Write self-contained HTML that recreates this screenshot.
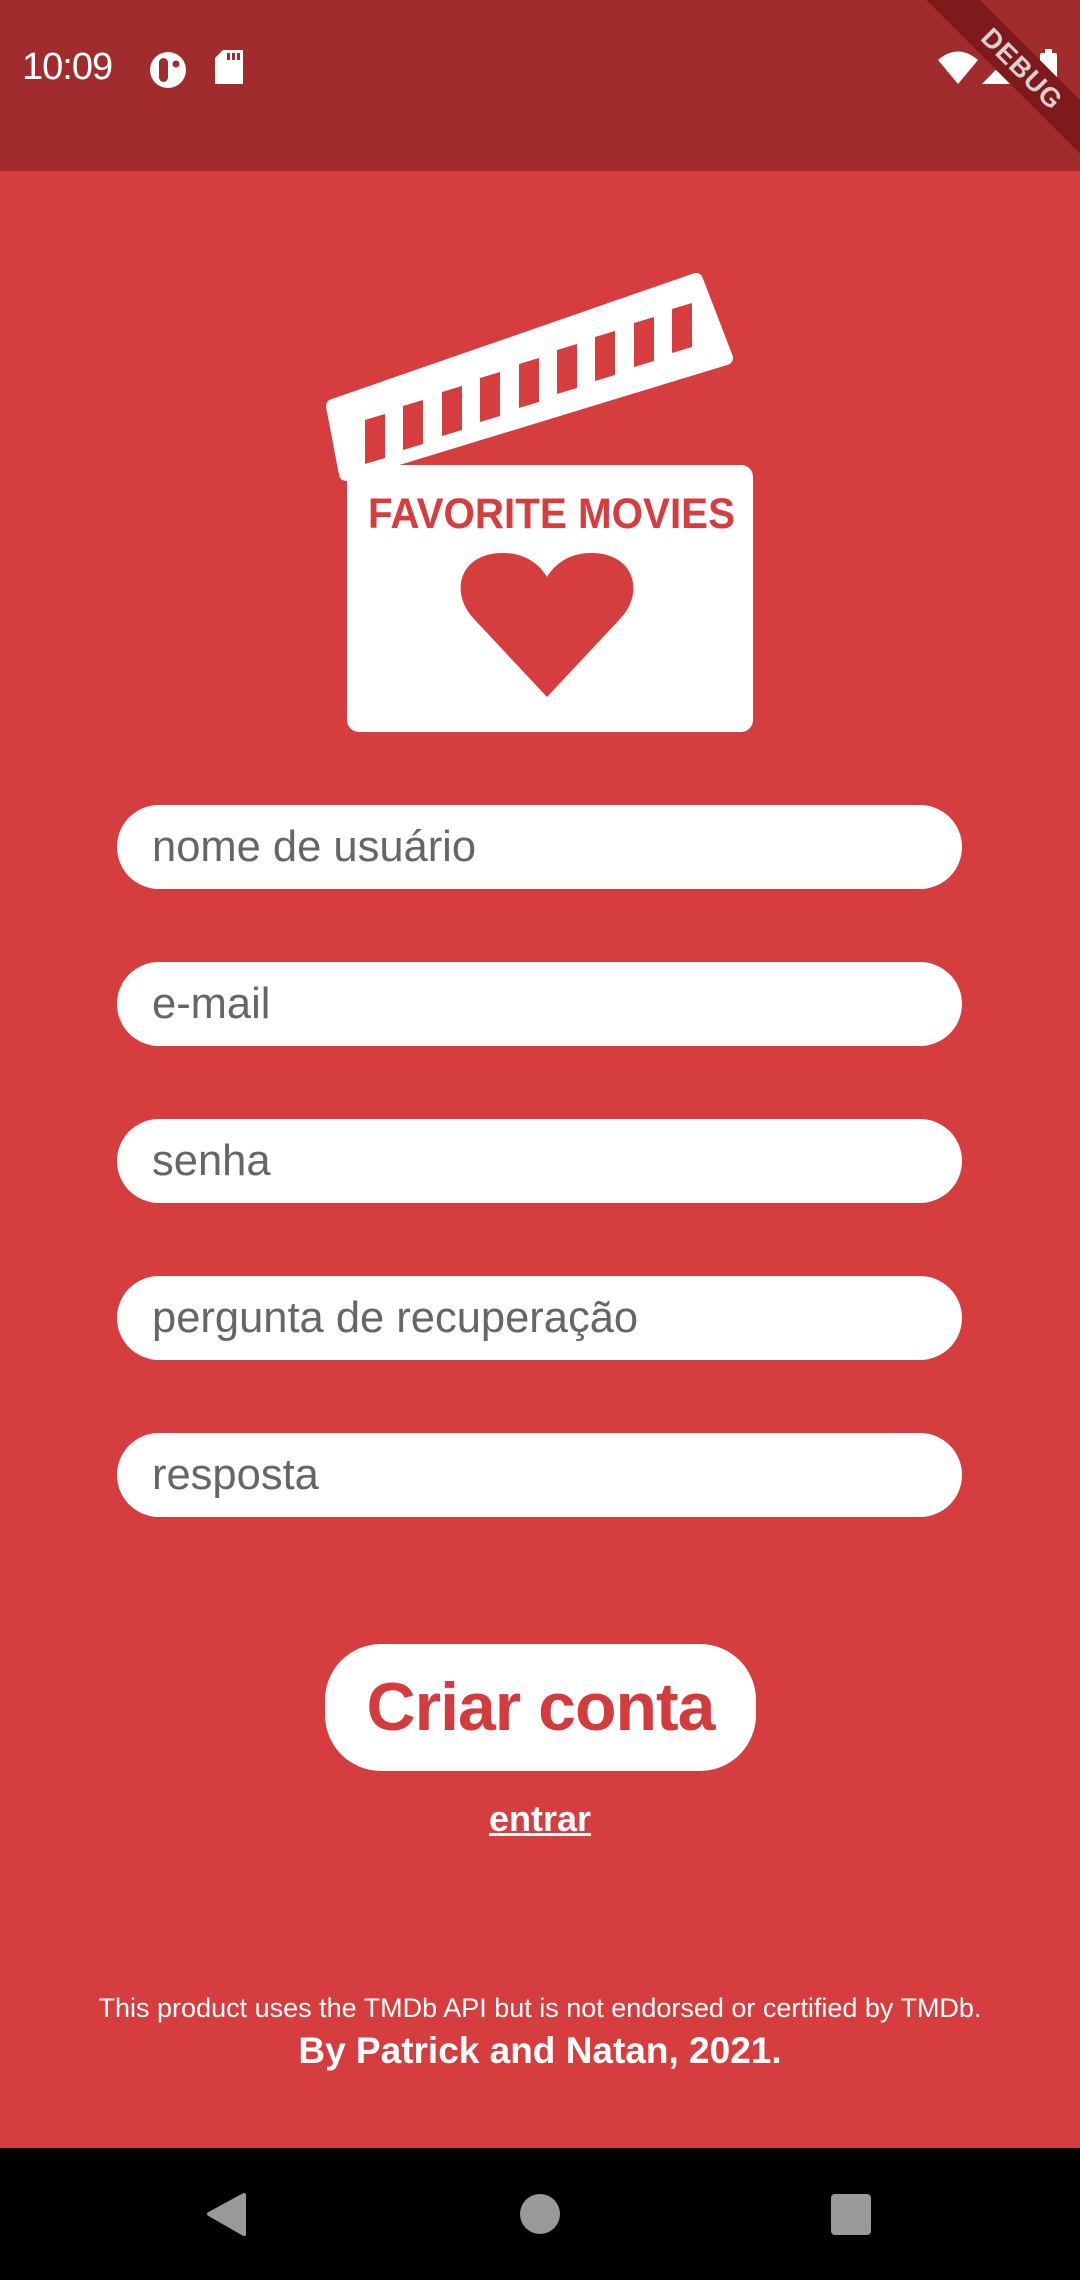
<!DOCTYPE html>
<html><head><meta charset="utf-8"><style>
*{margin:0;padding:0;box-sizing:border-box}
html,body{width:1080px;height:2280px;overflow:hidden;background:#D63D3E;font-family:"Liberation Sans",sans-serif;position:relative}
.status{position:absolute;left:0;top:0;width:1080px;height:171px;background:#A02C2E;overflow:hidden}
.time{position:absolute;left:22px;top:46px;font-size:38px;color:#fff;letter-spacing:-1px}
.ribbon{position:absolute;left:812px;top:50px;width:420px;height:38px;background:#7E1A1C;transform:rotate(45deg);color:#d8d0d0;font-weight:bold;font-size:27px;text-align:center;line-height:38px;letter-spacing:1px}
.inp{position:absolute;left:117px;width:845px;height:84px;background:#fff;border-radius:42px;color:#666;font-size:43.5px;line-height:84px;padding-left:35px}
.btn{position:absolute;left:325px;top:1644px;width:431px;height:127px;background:#fff;border-radius:56px;color:#D43B3C;font-weight:bold;font-size:68px;line-height:127px;text-align:center;letter-spacing:-1px}
.entrar{position:absolute;left:0;width:1080px;top:1798px;text-align:center;color:#fff;font-weight:bold;font-size:36px;text-decoration:underline;text-decoration-thickness:3px}
.f1{position:absolute;left:0;width:1080px;top:1993px;text-align:center;color:#fff;font-size:27px}
.f2{position:absolute;left:0;width:1080px;top:2030px;text-align:center;color:#fff;font-size:37px;font-weight:bold}
.nav{position:absolute;left:0;top:2148px;width:1080px;height:132px;background:#000}
</style></head><body>
<div class="status">
<div class="time">10:09</div>
<svg style="position:absolute;left:0;top:0" width="1080" height="171">
<circle cx="168" cy="70" r="18" fill="#fff"/>
<rect x="159" y="58" width="9" height="24" rx="4.5" fill="#A02C2E"/>
<circle cx="176" cy="64" r="3.5" fill="#A02C2E"/>
<path d="M223,50 H243 V84 H215 V58 Z" fill="#fff"/>
<rect x="227" y="53" width="3" height="7" fill="#A02C2E"/><rect x="232" y="53" width="3" height="7" fill="#A02C2E"/><rect x="237" y="53" width="3" height="7" fill="#A02C2E"/>
<path d="M938,60 Q958,43 978,60 L958,84 Z" fill="#fff"/>
<path d="M982,84 L1015,50 V84 Z" fill="#fff"/>
<rect x="1040" y="53" width="17" height="31" rx="2" fill="#fff"/><rect x="1045" y="49" width="7" height="5" fill="#fff"/>
</svg>
<div class="ribbon">DEBUG</div>
</div>

<svg style="position:absolute;left:0;top:0" width="1080" height="760">
<path d="M333,406 L696,280 L726,358 L346,474 Z" fill="#fff" stroke="#fff" stroke-width="14" stroke-linejoin="round"/>
<g fill="#D63D3E">
<path d="M365,420 L385,414 V458 L365,464 Z"/>
<path d="M403,406 L423,400 V444 L403,450 Z"/>
<path d="M442,392 L462,386 V430 L442,436 Z"/>
<path d="M480,378 L500,372 V416 L480,422 Z"/>
<path d="M519,364 L539,358 V402 L519,408 Z"/>
<path d="M557,350 L577,344 V388 L557,394 Z"/>
<path d="M595,337 L615,331 V375 L595,381 Z"/>
<path d="M634,323 L654,317 V361 L634,367 Z"/>
<path d="M672,309 L692,303 V347 L672,353 Z"/>
</g>
<rect x="347" y="465" width="406" height="267" rx="12" fill="#fff"/>
<text x="368" y="528" font-family="Liberation Sans, sans-serif" font-weight="bold" font-size="43" fill="#D63D3E" textLength="367" lengthAdjust="spacingAndGlyphs">FAVORITE MOVIES</text>
<path d="M547,697 L474,619 C450,594 458,555 500,553 C525,552 540,565 547,577 C554,565 569,552 594,553 C636,555 644,594 620,619 Z" fill="#D63D3E"/>
</svg>

<div class="inp" style="top:805px">nome de usuário</div>
<div class="inp" style="top:962px">e-mail</div>
<div class="inp" style="top:1119px">senha</div>
<div class="inp" style="top:1276px">pergunta de recuperação</div>
<div class="inp" style="top:1433px">resposta</div>

<div class="btn">Criar conta</div>
<div class="entrar">entrar</div>
<div class="f1">This product uses the TMDb API but is not endorsed or certified by TMDb.</div>
<div class="f2">By Patrick and Natan, 2021.</div>

<div class="nav">
<svg width="1080" height="132">
<path d="M244,47 V86 L209,66 Z" fill="#999" stroke="#999" stroke-width="4" stroke-linejoin="round"/>
<circle cx="540" cy="66" r="20" fill="#999"/>
<rect x="831" y="46" width="40" height="41" rx="4" fill="#999"/>
</svg>
</div>
</body></html>
